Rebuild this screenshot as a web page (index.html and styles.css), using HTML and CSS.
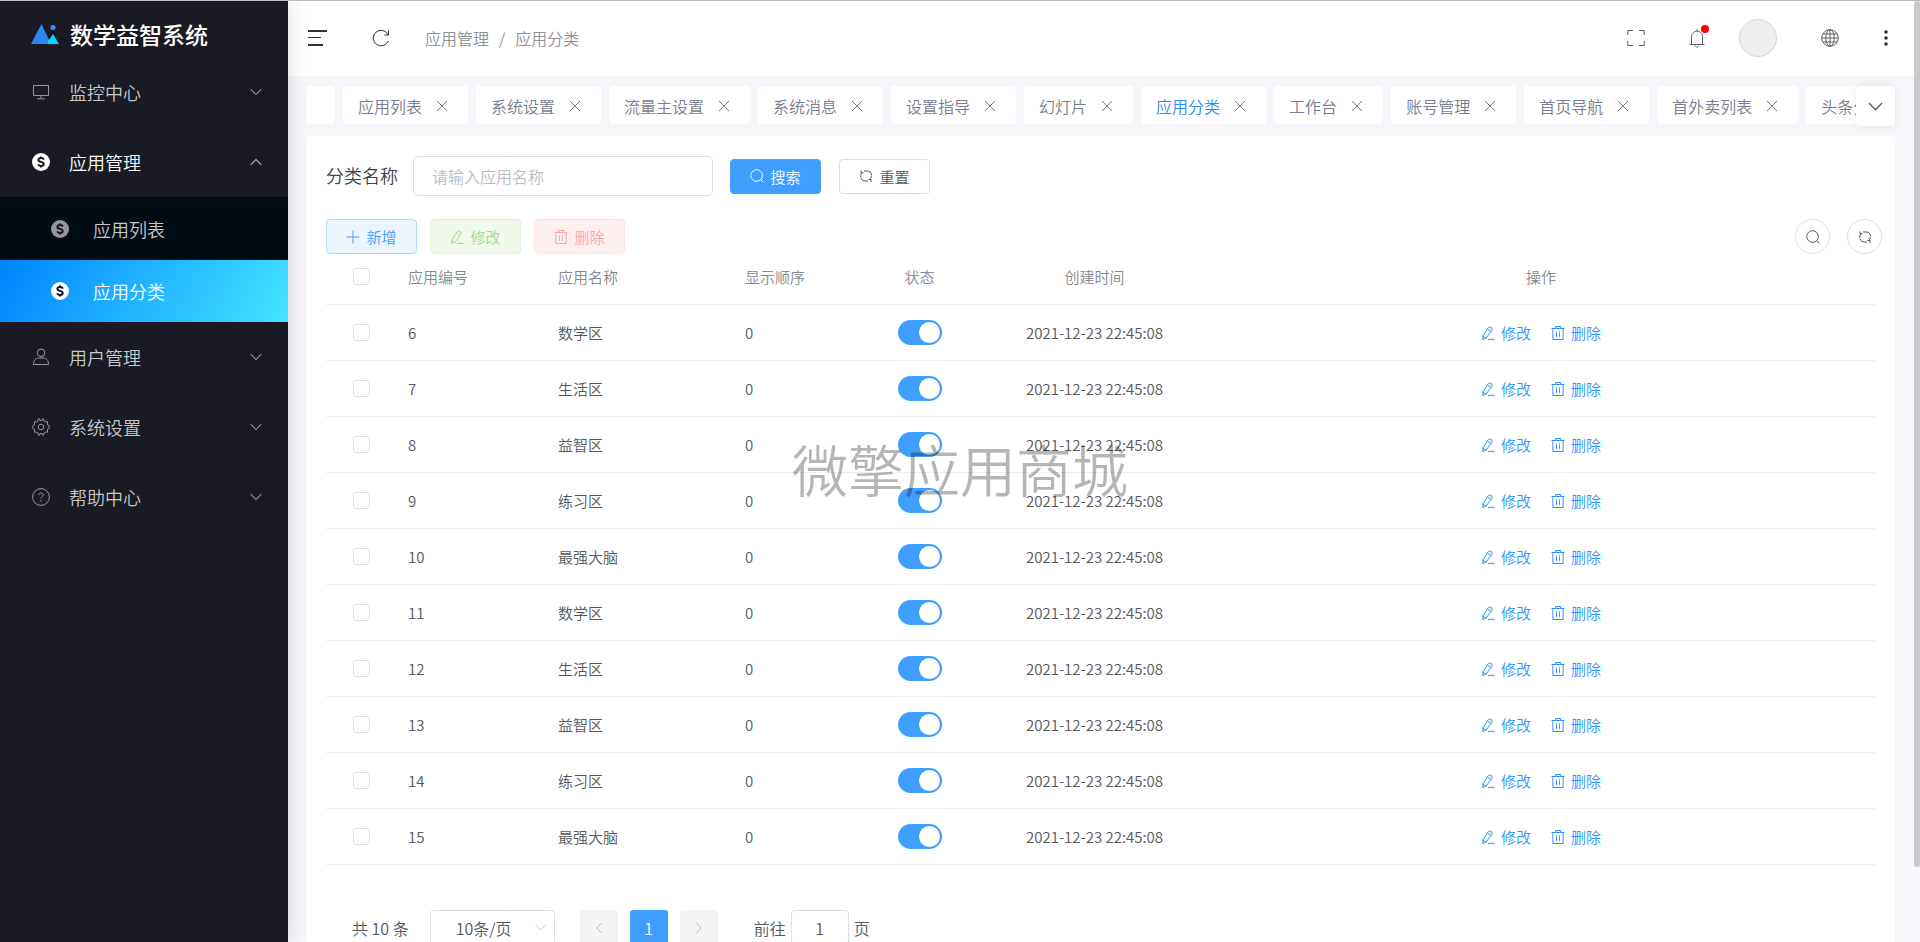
FILE: index.html
```html
<!DOCTYPE html>
<html lang="zh-CN">
<head>
<meta charset="utf-8">
<title>数学益智系统</title>
<link rel="stylesheet" href="styles.css">
</head>
<body>
<svg class="sprite" aria-hidden="true">
  <symbol id="down" viewBox="0 0 12 12"><path d="M.8 3.2 6 8.6l5.2-5.4"/></symbol>
  <symbol id="up" viewBox="0 0 12 12"><path d="M.8 8.8 6 3.4l5.2 5.4"/></symbol>
  <symbol id="close" viewBox="0 0 12 12"><path d="m1 1 10 10M11 1 1 11"/></symbol>
  <symbol id="coin" viewBox="0 0 18 18"><circle class="solid" cx="9" cy="9" r="9"/><path class="coin-s" d="M11.8 6.6C11.4 5.4 10.400 5 9 5 7.400 5 6.400 5.700 6.400 6.900 6.400 9.600 11.700 8.200 11.700 11 11.700 12.300 10.600 13 9 13 7.500 13 6.500 12.400 6.200 11.300M9 3.500V5M9 13v1.500"/></symbol>
  <symbol id="edit" viewBox="0 0 14 14"><path d="M6.800 2.200 8.600.8l2.600 1.500-.4 2L5 12.200l-3.400 1.200.3-3.400zM6.400 3l3.200 2.200M1.900 10l2.600 2.200M7 13.400h6.500"/></symbol>
  <symbol id="trash" viewBox="0 0 14 14"><path d="M.5 2.500h13M4.500 2.500V.5h5v2M1.900 2.500v11h10.200v-11M5.500 5.500v5.500M8.500 5.500v5.500"/></symbol>
  <symbol id="search" viewBox="0 0 14 14"><circle cx="6.600" cy="6.500" r="5.800"/><path d="m10.800 10.700 2.600 2.600"/></symbol>
  <symbol id="refresh" viewBox="0 0 14 14"><path d="M1.800 8.500V6.500A4.500 4.500 0 0 1 3 3.500M5 2H8A4.500 4.500 0 0 1 12.500 6M2 1.500v2.200h2.500M12.200 6.500v1A4.500 4.500 0 0 1 11 10.500M9 12H6A4.500 4.500 0 0 1 2 9M12 13v-2.500H9.500"/></symbol>
</svg>

<div class="app">
  <aside class="sidebar">
    <div class="brand">
      <svg class="logo" viewBox="0 0 28 22"><path fill="#2f88f0" d="M10.500 1 0 21h20z"/><path fill="#00d5ff" d="m22 11-5.500 8 1 2H28z"/><circle cx="22" cy="4.500" r="2.600" fill="#2f88f0"/></svg>
      <span>数学益智系统</span>
    </div>
    <nav class="menu">
      <a class="item" href="#"><svg class="ico" viewBox="0 0 18 18"><path d="M1.500 2.500h15v10h-15zM9 12.500V15M5 15.800h8"/></svg><span>监控中心</span><svg class="arrow"><use href="#down"/></svg></a>
      <a class="item open" href="#"><svg class="ico"><use href="#coin"/></svg><span>应用管理</span><svg class="arrow"><use href="#up"/></svg></a>
      <div class="submenu">
        <a class="subitem" href="#"><svg class="ico"><use href="#coin"/></svg><span>应用列表</span></a>
        <a class="subitem active" href="#" aria-current="page"><svg class="ico"><use href="#coin"/></svg><span>应用分类</span></a>
      </div>
      <a class="item" href="#"><svg class="ico" viewBox="0 0 18 18"><circle cx="9" cy="4.800" r="3.800"/><path d="M1.500 16.500c0-4.500 2.500-6.500 5-6.500h5c2.500 0 5 2 5 6.500z"/></svg><span>用户管理</span><svg class="arrow"><use href="#down"/></svg></a>
      <a class="item" href="#"><svg class="ico" viewBox="0 0 18 18"><path d="M6.500.8h1l.5 1.700h2L10.500.8h1l.5 2.200 1.500.8h2v3l1.700.7v3l-1.700.7v3h-2l-1.500.8-.5 2.200h-1l-.5-1.700H8l-.5 1.700h-1L6 15l-1.500-.8h-2v-3L.8 10.500v-3l1.700-.7v-3h2L6 3z"/><circle cx="9" cy="9" r="2.800"/></svg><span>系统设置</span><svg class="arrow"><use href="#down"/></svg></a>
      <a class="item" href="#"><svg class="ico" viewBox="0 0 18 18"><circle cx="9" cy="9" r="8.400"/><path d="M6.800 7.200C6.800 5.700 7.700 5 9 5s2.300.8 2.300 2C11.300 8.600 9 8.800 9 10.600M9 12v1.500"/></svg><span>帮助中心</span><svg class="arrow"><use href="#down"/></svg></a>
    </nav>
  </aside>

  <main class="main">
    <header class="topbar">
      <button class="icon-btn" aria-label="折叠菜单"><svg class="fold" viewBox="0 0 20 18"><path d="M1 2h19M1 16h15"/><path class="thin" d="M1 8.500h13"/></svg></button>
      <button class="icon-btn" aria-label="刷新"><svg class="reload" viewBox="0 0 18 18"><path d="M16 5.500A7.800 7.800 0 1 0 16.300 12M16.500 1.500V6h-4"/></svg></button>
      <nav class="crumbs" aria-label="面包屑"><a href="#">应用管理</a><span>/</span><a href="#">应用分类</a></nav>
      <div class="tools">
        <button class="icon-btn" aria-label="全屏"><svg class="tool" viewBox="0 0 18 18"><path d="M.8 6V1.500H6M12 1.500h5.200V6M.8 12v4.500H6M12 16.500h5.200V12"/></svg></button>
        <button class="icon-btn bell" aria-label="消息"><svg class="tool" viewBox="0 0 18 20"><path d="M1.500 16.500h15M3.500 16.500V9C3.500 5 6 3.200 9 3.200S14.500 5 14.500 9v7.500M9 1v2.200M7 17.500c.3 2 3.700 2 4 0"/></svg><i class="dot"></i></button>
        <button class="avatar" aria-label="账号"></button>
        <button class="icon-btn" aria-label="语言"><svg class="tool" viewBox="0 0 18 18"><circle cx="9" cy="9" r="8.300"/><ellipse cx="9" cy="9" rx="4.200" ry="8.300"/><path d="M9 .7v16.600M.7 9h16.600M2 5h14M2 13h14"/></svg></button>
        <button class="icon-btn more" aria-label="更多"><svg viewBox="0 0 4 18"><circle cx="2" cy="3" r="1.800"/><circle cx="2" cy="9" r="1.800"/><circle cx="2" cy="15" r="1.800"/></svg></button>
      </div>
    </header>

    <div class="tabbar">
      <div class="tabs">
        <div class="tab blank"></div>
        <div class="tab"><a href="#">应用列表</a><button aria-label="关闭"><svg><use href="#close"/></svg></button></div>
        <div class="tab"><a href="#">系统设置</a><button aria-label="关闭"><svg><use href="#close"/></svg></button></div>
        <div class="tab"><a href="#">流量主设置</a><button aria-label="关闭"><svg><use href="#close"/></svg></button></div>
        <div class="tab"><a href="#">系统消息</a><button aria-label="关闭"><svg><use href="#close"/></svg></button></div>
        <div class="tab"><a href="#">设置指导</a><button aria-label="关闭"><svg><use href="#close"/></svg></button></div>
        <div class="tab"><a href="#">幻灯片</a><button aria-label="关闭"><svg><use href="#close"/></svg></button></div>
        <div class="tab current"><a href="#">应用分类</a><button aria-label="关闭"><svg><use href="#close"/></svg></button></div>
        <div class="tab"><a href="#">工作台</a><button aria-label="关闭"><svg><use href="#close"/></svg></button></div>
        <div class="tab"><a href="#">账号管理</a><button aria-label="关闭"><svg><use href="#close"/></svg></button></div>
        <div class="tab"><a href="#">首页导航</a><button aria-label="关闭"><svg><use href="#close"/></svg></button></div>
        <div class="tab"><a href="#">首外卖列表</a><button aria-label="关闭"><svg><use href="#close"/></svg></button></div>
        <div class="tab"><a href="#">头条分类</a><button aria-label="关闭"><svg><use href="#close"/></svg></button></div>
      </div>
      <button class="tab-more" aria-label="更多标签"><svg><use href="#down"/></svg></button>
    </div>

    <section class="card">
      <form class="filter">
        <label for="name">分类名称</label>
        <input id="name" type="text" placeholder="请输入应用名称">
        <button type="button" class="btn primary"><svg><use href="#search"/></svg>搜索</button>
        <button type="reset" class="btn plain"><svg><use href="#refresh"/></svg>重置</button>
      </form>

      <div class="actions">
        <button class="btn add"><svg viewBox="0 0 14 14"><path d="M7 .5v13M.5 7h13"/></svg>新增</button>
        <button class="btn edit" disabled><svg><use href="#edit"/></svg>修改</button>
        <button class="btn del" disabled><svg><use href="#trash"/></svg>删除</button>
        <div class="round-group">
          <button class="round" aria-label="搜索"><svg><use href="#search"/></svg></button>
          <button class="round" aria-label="刷新"><svg><use href="#refresh"/></svg></button>
        </div>
      </div>

      <table class="grid">
        <colgroup><col class="c-check"><col class="c-id"><col class="c-name"><col class="c-order"><col class="c-state"><col class="c-time"><col></colgroup>
        <thead>
          <tr><th class="mid"><input type="checkbox" aria-label="全选"></th><th>应用编号</th><th>应用名称</th><th>显示顺序</th><th class="mid">状态</th><th class="mid">创建时间</th><th class="mid">操作</th></tr>
        </thead>
        <tbody>
          <tr><td class="mid"><input type="checkbox" aria-label="选择 6"></td><td>6</td><td>数学区</td><td>0</td><td class="mid"><input class="switch" type="checkbox" role="switch" checked aria-label="状态"></td><td class="mid">2021-12-23 22:45:08</td><td class="mid"><div class="ops"><button><svg><use href="#edit"/></svg>修改</button><button><svg><use href="#trash"/></svg>删除</button></div></td></tr>
          <tr><td class="mid"><input type="checkbox" aria-label="选择 7"></td><td>7</td><td>生活区</td><td>0</td><td class="mid"><input class="switch" type="checkbox" role="switch" checked aria-label="状态"></td><td class="mid">2021-12-23 22:45:08</td><td class="mid"><div class="ops"><button><svg><use href="#edit"/></svg>修改</button><button><svg><use href="#trash"/></svg>删除</button></div></td></tr>
          <tr><td class="mid"><input type="checkbox" aria-label="选择 8"></td><td>8</td><td>益智区</td><td>0</td><td class="mid"><input class="switch" type="checkbox" role="switch" checked aria-label="状态"></td><td class="mid">2021-12-23 22:45:08</td><td class="mid"><div class="ops"><button><svg><use href="#edit"/></svg>修改</button><button><svg><use href="#trash"/></svg>删除</button></div></td></tr>
          <tr><td class="mid"><input type="checkbox" aria-label="选择 9"></td><td>9</td><td>练习区</td><td>0</td><td class="mid"><input class="switch" type="checkbox" role="switch" checked aria-label="状态"></td><td class="mid">2021-12-23 22:45:08</td><td class="mid"><div class="ops"><button><svg><use href="#edit"/></svg>修改</button><button><svg><use href="#trash"/></svg>删除</button></div></td></tr>
          <tr><td class="mid"><input type="checkbox" aria-label="选择 10"></td><td>10</td><td>最强大脑</td><td>0</td><td class="mid"><input class="switch" type="checkbox" role="switch" checked aria-label="状态"></td><td class="mid">2021-12-23 22:45:08</td><td class="mid"><div class="ops"><button><svg><use href="#edit"/></svg>修改</button><button><svg><use href="#trash"/></svg>删除</button></div></td></tr>
          <tr><td class="mid"><input type="checkbox" aria-label="选择 11"></td><td>11</td><td>数学区</td><td>0</td><td class="mid"><input class="switch" type="checkbox" role="switch" checked aria-label="状态"></td><td class="mid">2021-12-23 22:45:08</td><td class="mid"><div class="ops"><button><svg><use href="#edit"/></svg>修改</button><button><svg><use href="#trash"/></svg>删除</button></div></td></tr>
          <tr><td class="mid"><input type="checkbox" aria-label="选择 12"></td><td>12</td><td>生活区</td><td>0</td><td class="mid"><input class="switch" type="checkbox" role="switch" checked aria-label="状态"></td><td class="mid">2021-12-23 22:45:08</td><td class="mid"><div class="ops"><button><svg><use href="#edit"/></svg>修改</button><button><svg><use href="#trash"/></svg>删除</button></div></td></tr>
          <tr><td class="mid"><input type="checkbox" aria-label="选择 13"></td><td>13</td><td>益智区</td><td>0</td><td class="mid"><input class="switch" type="checkbox" role="switch" checked aria-label="状态"></td><td class="mid">2021-12-23 22:45:08</td><td class="mid"><div class="ops"><button><svg><use href="#edit"/></svg>修改</button><button><svg><use href="#trash"/></svg>删除</button></div></td></tr>
          <tr><td class="mid"><input type="checkbox" aria-label="选择 14"></td><td>14</td><td>练习区</td><td>0</td><td class="mid"><input class="switch" type="checkbox" role="switch" checked aria-label="状态"></td><td class="mid">2021-12-23 22:45:08</td><td class="mid"><div class="ops"><button><svg><use href="#edit"/></svg>修改</button><button><svg><use href="#trash"/></svg>删除</button></div></td></tr>
          <tr><td class="mid"><input type="checkbox" aria-label="选择 15"></td><td>15</td><td>最强大脑</td><td>0</td><td class="mid"><input class="switch" type="checkbox" role="switch" checked aria-label="状态"></td><td class="mid">2021-12-23 22:45:08</td><td class="mid"><div class="ops"><button><svg><use href="#edit"/></svg>修改</button><button><svg><use href="#trash"/></svg>删除</button></div></td></tr>
        </tbody>
      </table>

      <div class="pager">
        <span>共 10 条</span>
        <div class="size"><select aria-label="每页条数"><option>10条/页</option></select><svg><use href="#down"/></svg></div>
        <div class="pages">
          <button disabled aria-label="上一页"><svg viewBox="0 0 12 12"><path d="M8.500 1 4 6l4.500 5"/></svg></button>
          <button class="on">1</button>
          <button disabled aria-label="下一页"><svg viewBox="0 0 12 12"><path d="M3.500 1 8 6l-4.500 5"/></svg></button>
        </div>
        <div class="jump"><label for="page">前往</label><input id="page" type="text" value="1"><span>页</span></div>
      </div>
    </section>
  </main>
  <div class="scroll"><div class="thumb"></div></div>
</div>
<div class="watermark">微擎应用商城</div>
</body>
</html>
```
FILE: styles.css
```css
* { box-sizing: border-box; }
body {
  margin: 0;
  height: 100vh;
  overflow: hidden;
  border-top: 1px solid #bcbcbc;
  background: #f5f6f9;
  color: #56585c;
  font-family: "Noto Sans CJK SC", "Liberation Sans", sans-serif;
  font-size: 15px;
  font-weight: 350;
}
button, input, select { font: inherit; color: inherit; }
button { padding: 0; border: 0; background: none; cursor: pointer; }
a { color: inherit; text-decoration: none; }
svg { fill: none; stroke: currentColor; stroke-width: 1; flex: none; }
.sprite { display: none; }

.app { display: flex; height: 100%; }

.sidebar {
  position: relative;
  flex: none;
  width: 288px;
  background: #191a23;
  color: #c8c8ca;
  font-size: 18px;
  box-shadow: 2px 0 18px rgba(0, 0, 0, 0.12);
}
.brand {
  display: flex;
  align-items: center;
  gap: 11px;
  height: 56px;
  padding: 9px 31px 0;
  color: #fff;
  font-size: 23px;
  font-weight: 500;
}
.logo { width: 28px; height: 22px; stroke: none; }
.item { display: flex; align-items: center; height: 70px; padding: 0 26px 0 32px; }
.item span { flex: 1; margin-left: 19px; }
.ico { width: 18px; height: 18px; color: #96979b; }
.solid { fill: currentColor; stroke: none; }
.coin-s { stroke: #14151d; stroke-width: 2; }
.arrow { width: 12px; height: 12px; }
.open, .open .ico { color: #fff; }
.submenu { background: #010c14; }
.subitem { display: flex; align-items: center; gap: 24px; height: 63px; padding-left: 51px; }
.subitem.active { height: 62px; background: linear-gradient(118deg, #0084ff, #43e5ff); color: #fff; }
.active .ico { color: #fff; }
.active .coin-s { stroke: #1390ff; }

.main { flex: 1; min-width: 0; }
.topbar {
  display: flex;
  align-items: center;
  height: 75px;
  padding: 0 26px 2px 19px;
  background: #fff;
  color: #303133;
}
.icon-btn { display: flex; position: relative; }
.fold { width: 20px; height: 18px; stroke-width: 2; margin-right: 45px; }
.thin { stroke-width: 1; }
.reload { width: 18px; height: 18px; margin-right: 35px; }
.crumbs { display: flex; gap: 10px; color: #8f9195; font-size: 16px; }
.tools { display: flex; align-items: center; margin-left: auto; color: #606266; }
.tool { width: 18px; height: 18px; }
.bell { margin-left: 43px; }
.bell .tool { height: 20px; }
.dot { position: absolute; top: -3px; right: -3px; width: 8px; height: 8px; border-radius: 50%; background: #f00; }
.avatar { width: 38px; height: 38px; margin: 0 44px 0 33px; border: 1px solid #d6d6d6; border-radius: 50%; background: #eee; }
.more { margin-left: 45px; color: #303133; }
.more svg { width: 4px; height: 18px; fill: currentColor; stroke: none; }

.tabbar { display: flex; padding: 10px 19px 10px 18px; color: #787e8d; font-size: 16px; }
.tabs { display: flex; flex: 1; gap: 8px; min-width: 0; overflow: hidden; }
.tab { display: flex; flex: none; align-items: center; gap: 14px; height: 38px; padding: 2px 20px 0 15px; border-radius: 4px; background: #fff; }
.tab svg { display: block; width: 12px; height: 12px; }
.blank { width: 29px; padding: 0; }
.current a { color: #2d8cf0; }
.tab-more { display: grid; place-items: center; flex: none; width: 39px; height: 40px; border-radius: 4px; background: #fff; color: #515a6e; box-shadow: 0 0 8px rgba(0, 0, 0, 0.08); }
.tab-more svg { width: 15px; height: 15px; }

.card { margin: 0 19px 0 18px; padding: 20px; border-radius: 4px; background: #fff; }
.filter { display: flex; align-items: center; }
.filter label { margin-right: 15px; padding-bottom: 2px; color: #404244; font-size: 18px; }
.filter input { width: 300px; height: 40px; margin-right: 17px; padding: 0 18px; border: 1px solid #dcdfe6; border-radius: 5px; font-size: 16px; }
::placeholder { color: #b8bcc5; opacity: 1; }
.btn { display: flex; align-items: center; justify-content: center; gap: 6px; width: 91px; height: 35px; border: 1px solid #dcdfe6; border-radius: 4px; }
.btn svg { width: 14px; height: 14px; }
.primary { margin-right: 18px; border-color: #409eff; background: #409eff; color: #fff; }
.plain { background: #fff; }
.actions { display: flex; gap: 13px; margin: 23px -7px 0 0; }
.add { border-color: #b3d8ff; background: #ecf5ff; color: #409eff; }
.edit { border-color: #e1f3d8; background: #f0f9eb; color: #a4da89; }
.del { border-color: #fde2e2; background: #fef0f0; color: #f9a7a7; }
.round-group { display: flex; gap: 17px; margin-left: auto; }
.round { display: grid; place-items: center; width: 35px; height: 35px; border: 1px solid #dcdfe6; border-radius: 50%; }
.round svg { width: 14px; height: 14px; }

.grid { width: 100%; border-collapse: separate; border-spacing: 0; table-layout: fixed; }
.c-check { width: 70px; }
.c-id { width: 150px; }
.c-name { width: 187px; }
.c-order { width: 124px; }
.c-state { width: 125px; }
.c-time { width: 225px; }
.grid th, .grid td { height: 56px; padding: 0 12px; border-bottom: 1px solid #ebeef5; text-align: left; }
.grid th { height: 51px; padding-bottom: 5px; color: #85888e; font-weight: inherit; }
.grid .mid { text-align: center; }
.grid input { appearance: none; display: block; width: 17px; height: 17px; margin: 0 auto; border: 1px solid #dcdfe6; border-radius: 3px; background: #fff; }
.grid .switch { width: 44px; height: 25px; padding: 2px; border: 0; border-radius: 13px; background: #409eff; }
.switch::before { content: ""; display: block; width: 21px; height: 21px; margin-left: auto; border-radius: 50%; background: #fff; }
.ops { display: flex; justify-content: center; gap: 20px; color: #2f94ff; }
.ops button { display: flex; align-items: center; gap: 6px; }
.ops svg { width: 14px; height: 14px; }

.pager { display: flex; align-items: center; margin-top: 45px; padding-left: 26px; font-size: 16px; }
.size { position: relative; margin: 0 25px 0 21px; }
.size select { appearance: none; display: block; width: 125px; height: 35px; padding: 0 25px; border: 1px solid #dcdfe6; border-radius: 4px; background: #fff; }
.size svg { position: absolute; top: 12px; right: 9px; width: 11px; height: 11px; color: #c0c4cc; }
.pages { display: flex; gap: 12px; margin-right: 36px; }
.pages button { display: grid; place-items: center; width: 38px; height: 35px; border-radius: 3px; background: #f4f4f5; color: #b4b8c1; }
.pages .on { background: #409eff; color: #fff; }
.pages svg { width: 12px; height: 12px; }
.jump { display: flex; align-items: center; gap: 5px; }
.jump input { width: 58px; height: 35px; border: 1px solid #dcdfe6; border-radius: 4px; text-align: center; }

.scroll { flex: none; width: 6px; background: #f7f7f7; }
.thumb { height: 92%; border-radius: 3px; background: #cacaca; }

.watermark {
  position: fixed;
  top: 50%;
  left: 50%;
  transform: translate(-50%, -50%);
  padding-bottom: 6px;
  color: rgba(0, 0, 0, 0.29);
  font-size: 56px;
  line-height: 1;
  white-space: nowrap;
  pointer-events: none;
}
```
